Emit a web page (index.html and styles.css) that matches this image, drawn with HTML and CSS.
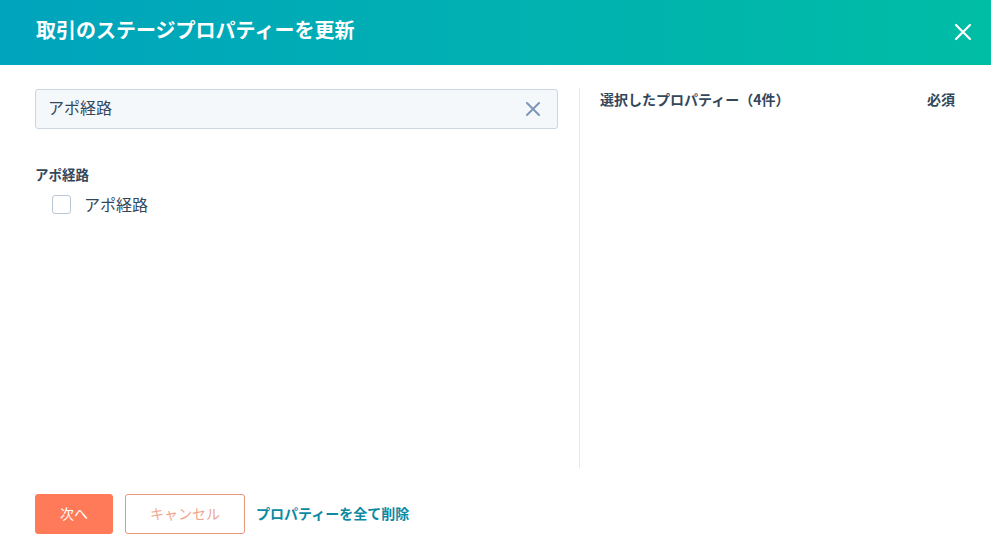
FILE: index.html
```html
<!DOCTYPE html>
<html lang="ja">
<head>
<meta charset="utf-8">
<link rel="stylesheet" href="styles.css">
</head>
<body>
<div class="dialog">
  <header class="dlg-header">
    <h1 class="dlg-title">取引のステージプロパティーを更新</h1>
    <button class="dlg-close" aria-label="閉じる">
      <svg width="18" height="18" viewBox="0 0 18 18"><path d="M2 2L16 16M16 2L2 16" stroke="#fff" stroke-width="2.2" stroke-linecap="round"/></svg>
    </button>
  </header>
  <main class="dlg-body">
    <section class="col-left">
      <div class="search">
        <span class="search-text">アポ経路</span>
        <svg class="search-clear" width="14" height="14" viewBox="0 0 14 14"><path d="M1 1L13 13M13 1L1 13" stroke="#7c98b6" stroke-width="2" stroke-linecap="round"/></svg>
      </div>
      <div class="group">
        <div class="group-label">アポ経路</div>
        <label class="check-row">
          <span class="checkbox"></span>
          <span class="check-text">アポ経路</span>
        </label>
      </div>
    </section>
    <section class="col-right">
      <div class="sel-head">
        <span>選択したプロパティー（4件）</span>
        <span>必須</span>
      </div>
    </section>
  </main>
  <footer class="dlg-footer">
    <button class="btn btn-primary">次へ</button>
    <button class="btn btn-secondary">キャンセル</button>
    <a class="link-clear">プロパティーを全て削除</a>
  </footer>
</div>
</body>
</html>
```
FILE: styles.css
```css
* { box-sizing: border-box; }
html, body { margin: 0; padding: 0; background: #fff; }
body {
  font-family: "Noto Sans CJK JP", "Noto Sans", sans-serif;
  color: #33475b;
  width: 991px;
  height: 556px;
  overflow: hidden;
}
.dlg-header {
  height: 65px;
  background: linear-gradient(to right, #00a4bd, #00bda5);
  display: flex;
  align-items: center;
  justify-content: space-between;
  padding: 0 19px 0 36px;
}
.dlg-title {
  margin: 0;
  color: #fff;
  font-size: 20px;
  font-weight: 700;
  line-height: 1;
  padding-bottom: 5px;
}
.dlg-close {
  background: none;
  border: 0;
  padding: 0;
  width: 18px;
  height: 18px;
  display: flex;
  margin-bottom: 2px;
}
.dlg-body {
  display: grid;
  grid-template-columns: 523px 1fr;
  column-gap: 21px;
  padding: 24px 36px 0 35px;
  height: 403px;
}
.search {
  height: 40px;
  background: #f5f8fa;
  border: 1px solid #cbd6e2;
  border-radius: 3px;
  display: flex;
  align-items: center;
  justify-content: space-between;
  padding: 0 17px 0 12px;
}
.search-text { font-size: 16px; line-height: 1; padding-bottom: 4px; }
.group { padding-top: 35px; }
.group-label {
  font-size: 13.5px;
  font-weight: 700;
  line-height: 20px;
}
.check-row {
  display: flex;
  align-items: center;
  padding-left: 17px;
  margin-top: 10px;
  height: 20px;
}
.checkbox {
  width: 19px;
  height: 19px;
  border: 1px solid #b9c6d5;
  border-radius: 3px;
  background: #fff;
}
.check-text { font-size: 16px; margin-left: 13px; line-height: 20px; }
.col-right {
  border-left: 1px solid #e5e8ed;
  padding-left: 20px;
  margin-top: -1px;
}
.sel-head {
  display: flex;
  justify-content: space-between;
  font-size: 14px;
  font-weight: 700;
  line-height: 20px;
  padding-top: 1px;
}
.dlg-footer {
  display: flex;
  align-items: center;
  padding: 26px 0 0 35px;
}
.btn {
  height: 40px;
  border-radius: 3px;
  font-family: inherit;
  font-size: 14px;
  line-height: 1;
  padding: 0 0 3px;
}
.btn-primary {
  width: 78px;
  background: #ff7a59;
  border: 1px solid #ff7a59;
  color: #fff;
}
.btn-secondary {
  width: 120px;
  margin-left: 12px;
  background: #fff;
  border: 1px solid #e8967e;
  color: #f0a68e;
}
.link-clear {
  margin-left: 11px;
  color: #0a8aa3;
  font-size: 14px;
  font-weight: 700;
  padding-bottom: 3px;
}
```
